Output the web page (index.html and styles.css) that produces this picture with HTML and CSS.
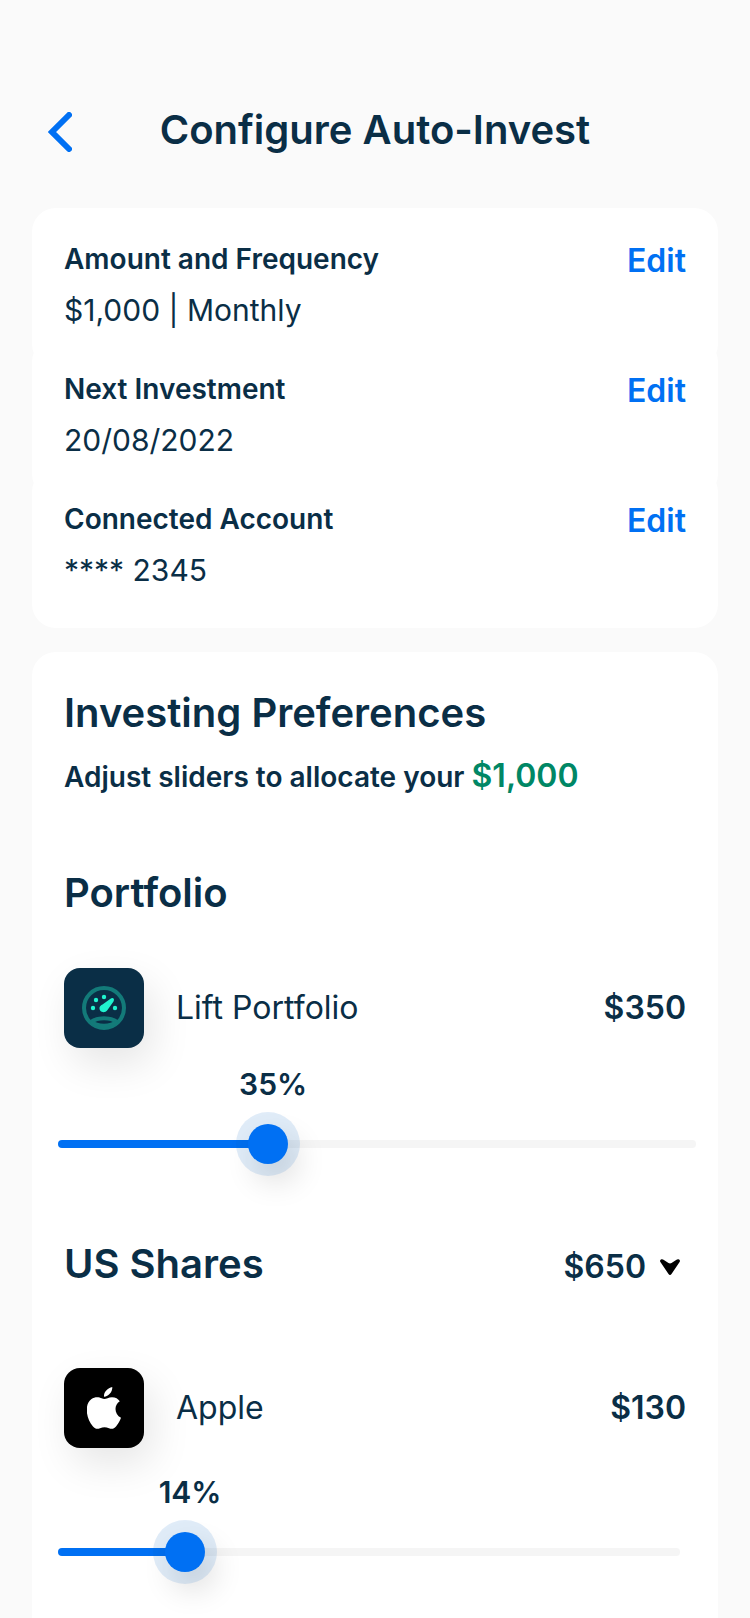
FILE: index.html
```html
<!DOCTYPE html>
<html lang="en">
<head>
    <meta charset="UTF-8">
    <meta name="viewport" content="width=device-width, initial-scale=1.0">
    <title>Configure Auto-Invest</title>
    <link rel="stylesheet" href="styles.css">
</head>
<body>
    <header class="header">
        <button class="back" type="button" aria-label="Back">
            <svg width="24" height="40" viewBox="0 0 24 40" fill="none" stroke="currentColor" stroke-width="6" stroke-linecap="round">
                <path d="M21 3L4 20L21 37"/>
            </svg>
        </button>
        <h1>Configure Auto-Invest</h1>
    </header>

    <main class="content">
        <!-- Plan details -->
        <section class="details">
            <div class="detail">
                <div>
                    <h2 class="label">Amount and Frequency</h2>
                    <p class="value">$1,000 | Monthly</p>
                </div>
                <button class="edit" type="button">Edit</button>
            </div>
            <div class="detail">
                <div>
                    <h2 class="label">Next Investment</h2>
                    <p class="value">20/08/2022</p>
                </div>
                <button class="edit" type="button">Edit</button>
            </div>
            <div class="detail">
                <div>
                    <h2 class="label">Connected Account</h2>
                    <p class="value">**** 2345</p>
                </div>
                <button class="edit" type="button">Edit</button>
            </div>
        </section>

        <!-- Allocation -->
        <section class="preferences">
            <h2 class="title">Investing Preferences</h2>
            <p class="hint">Adjust sliders to allocate your <strong class="total">$1,000</strong></p>

            <div class="group portfolio">
                <h3 class="title">Portfolio</h3>
                <div class="holding">
                    <div class="icon icon-lift">
                        <svg width="44" height="44" viewBox="0 0 44 44" fill="none">
                            <g stroke="#137a79" stroke-width="4">
                                <circle cx="22" cy="22" r="20"/>
                                <path d="M9 36C16 31 28 31 35 36"/>
                                <path d="M9 36C16 41 28 41 35 36"/>
                            </g>
                            <g fill="#20f3cf">
                                <circle cx="11" cy="22" r="2.2"/>
                                <circle cx="14" cy="14" r="2.2"/>
                                <circle cx="22" cy="11" r="2.2"/>
                                <circle cx="33" cy="22" r="2.2"/>
                                <path d="M28.500 12.700C31 11 33 13 31.500 15.500L25.500 24C22.500 28 17 26 17.500 21.500C18 20 19 19.200 20.500 18.500Z"/>
                            </g>
                        </svg>
                    </div>
                    <label class="name" for="lift">Lift Portfolio</label>
                    <span class="amount">$350</span>
                </div>
                <div class="slider slider-wide" style="--fill: 0.318">
                    <output class="percent" for="lift">35%</output>
                    <input class="range" id="lift" type="range" min="0" max="110" value="35">
                </div>
            </div>

            <div class="group shares">
                <div class="group-head">
                    <h3 class="title">US Shares</h3>
                    <button class="toggle" type="button" aria-expanded="true">
                        $650
                        <svg width="20" height="16" viewBox="0 0 20 16">
                            <path d="M1 0.500C0 1 -0.200 2 0.400 3L8.500 15C9.300 16.200 10.700 16.200 11.500 15L19.600 3C20.200 2 20 1 19 0.500C18 0 17.300 0.200 16.500 0.700L11.500 4C10.500 4.600 9.500 4.600 8.500 4L3.500 0.700C2.700 0.200 2 0 1 0.500Z"/>
                        </svg>
                    </button>
                </div>
                <div class="holding">
                    <div class="icon icon-apple">
                        <svg width="34" height="42" viewBox="0 0 34 42" fill="#fff">
                            <path d="M25.300 0C25.600 4.700 21.500 9.700 17 9.700C16.500 5.200 20.800 0.600 25.300 0Z"/>
                            <path d="M17.300 12C19.300 12 21.600 10.200 25 10.200C28.400 10.200 31.300 11.800 32.800 14.300C26.500 18 27.300 27.800 34 30.700C32.800 34 31 37 29 39.500C26.800 42.200 24.500 42.300 22 41.200C18.800 39.800 16.200 39.800 13 41.200C10.300 42.400 8.200 42 6 39.500C-1.400 31 -2.500 17 4.200 12.200C8.400 9.200 12.400 10.300 14.600 11.300C15.700 11.800 16.400 12 17.300 12Z"/>
                        </svg>
                    </div>
                    <label class="name" for="apple">Apple</label>
                    <span class="amount">$130</span>
                </div>
                <div class="slider" style="--fill: 0.184">
                    <output class="percent" for="apple">14%</output>
                    <input class="range" id="apple" type="range" min="0" max="76" value="14">
                </div>
            </div>
        </section>
    </main>
</body>
</html>
```
FILE: styles.css
```css
* {
    box-sizing: border-box;
}
body {
    background-color: #fafafa;
    color: #0a2e46;
    font-family: Inter, "Liberation Sans", sans-serif;
    font-size: 32px;
    line-height: 40px;
    margin: 0;
    min-height: 100vh;
    display: flex;
    flex-direction: column;
}
h1, h2, h3, p {
    margin: 0;
}
button {
    background: none;
    border: none;
    padding: 0;
    color: inherit;
    font: inherit;
    cursor: pointer;
}
.header {
    display: grid;
    grid-template-columns: 1fr auto 1fr;
    align-items: start;
    padding: 106px 48px 50px;
}
.header h1, .title {
    font-size: 40px;
    font-weight: 600;
    line-height: 48px;
}
.back {
    display: flex;
    align-items: center;
    justify-self: start;
    height: 52px;
    color: #0070f3;
}
.content {
    flex: 1;
    display: flex;
    flex-direction: column;
    gap: 24px;
    padding: 0 32px;
}

/* Plan details, each card tucks under the next */
.detail {
    display: flex;
    justify-content: space-between;
    align-items: flex-start;
    background-color: #fff;
    border-radius: 24px;
    padding: 33px 32px 38px;
}
.detail + .detail {
    margin-top: -30px;
}
.label, .hint {
    font-size: 28px;
    font-weight: 600;
}
.label {
    line-height: 36px;
    margin-bottom: 13px;
}
.value, .percent {
    font-size: 30px;
}
.edit {
    color: #0070f3;
    font-weight: 600;
}

/* Allocation */
.preferences {
    flex: 1;
    background-color: #fff;
    border-radius: 24px 24px 0 0;
    padding: 37px 32px 32px;
}
.hint {
    margin-top: 19px;
}
.total {
    color: #008765;
    font-size: 32px;
    font-weight: 600;
}
.portfolio {
    margin-top: 72px;
}
.shares {
    margin-top: 64px;
}
.portfolio .holding {
    margin: 51px 0 16px;
}
.shares .holding {
    margin: 80px 0 24px;
}
.group-head {
    display: flex;
    justify-content: space-between;
    align-items: baseline;
}
.toggle {
    display: flex;
    align-items: center;
    gap: 14px;
    padding-right: 6px;
    font-weight: 600;
}
.holding {
    display: flex;
    align-items: center;
    gap: 32px;
}
.icon {
    display: flex;
    align-items: center;
    justify-content: center;
    width: 80px;
    height: 80px;
    border-radius: 16px;
    box-shadow: 8px 16px 40px rgba(0, 0, 0, 0.1);
}
.icon-lift {
    background-color: #0a2e46;
}
.icon-apple {
    background-color: #000;
}
.name {
    flex: 1;
}
.amount, .percent {
    font-weight: 600;
}

.slider {
    display: flex;
    flex-direction: column;
    gap: 8px;
    margin: 0 6px 0 -6px;
}
.slider-wide {
    margin-right: -10px;
}
.percent {
    width: 80px;
    margin-left: calc((100% - 40px) * var(--fill) - 15px);
    text-align: center;
}
.range {
    -webkit-appearance: none;
    appearance: none;
    width: 100%;
    height: 64px;
    margin: 0;
    background: none;
    cursor: pointer;
}
.range::-webkit-slider-runnable-track {
    height: 8px;
    border-radius: 4px;
    background: linear-gradient(#0070f3, #0070f3) no-repeat #f5f5f5;
    background-size: calc(20px + (100% - 40px) * var(--fill)) 100%;
}
.range::-webkit-slider-thumb {
    -webkit-appearance: none;
    width: 40px;
    height: 40px;
    margin-top: -16px;
    border-radius: 50%;
    background-color: #0070f3;
    box-shadow: 0 0 0 12px rgba(0, 100, 200, 0.12), 8px 16px 32px rgba(0, 0, 0, 0.16);
}
```
